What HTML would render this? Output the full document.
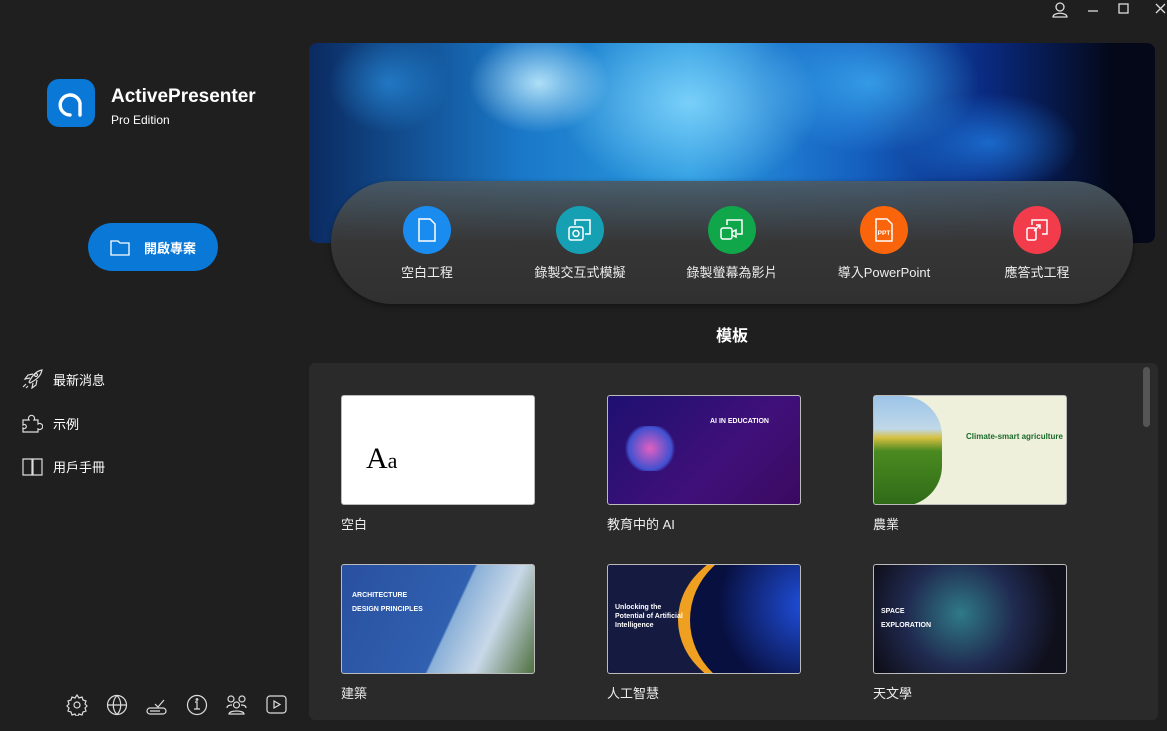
<!DOCTYPE html>
<html><head><meta charset="utf-8"><style>
*{margin:0;padding:0;box-sizing:border-box}
body{width:1167px;height:731px;background:#1f1f1f;font-family:"Liberation Sans","Noto Sans CJK TC",sans-serif;color:#fff;position:relative;overflow:hidden}
.abs{position:absolute}
.banner{left:309px;top:43px;width:846px;height:200px;border-radius:8px;overflow:hidden;
background:
radial-gradient(ellipse 70px 50px at 230px 40px,rgba(200,240,255,.85),transparent),
radial-gradient(ellipse 130px 90px at 380px 60px,rgba(140,220,255,.8),transparent),
radial-gradient(ellipse 110px 70px at 560px 40px,rgba(60,170,240,.8),transparent),
radial-gradient(ellipse 90px 50px at 680px 100px,rgba(30,120,220,.8),transparent),
radial-gradient(ellipse 60px 50px at 80px 40px,rgba(40,140,220,.7),transparent),
linear-gradient(90deg,#0b2a60,#1a78c8 25%,#2a9ae0 45%,#1560c0 65%,#0a2a80 80%,#040818 95%);}
.pill{left:331px;top:181px;width:802px;height:123px;border-radius:62px;
background:linear-gradient(180deg,rgba(75,90,100,.92),#363636 50%,#303030);box-shadow:0 2px 6px rgba(0,0,0,.4)}
.act{position:absolute;top:206px;width:160px;text-align:center;font-size:13px;color:#eee}
.act .c{width:48px;height:48px;border-radius:50%;margin:0 auto 8px;display:flex;align-items:center;justify-content:center}
.nav{left:22px;font-size:13px;display:flex;align-items:center;gap:10px}
.panel{left:309px;top:363px;width:849px;height:357px;background:#2a2a2a;border-radius:6px}
.t{position:absolute;width:194px;height:110px;border:1px solid #bbb;border-radius:3px;overflow:hidden}
.lbl{position:absolute;font-size:13px;color:#eee}
</style></head><body>
<svg class="abs" style="left:1050px;top:0" width="117" height="20" fill="none" stroke="#ddd" stroke-width="1.3">
<circle cx="10" cy="7" r="4"/><path d="M3 17c0-5 14-5 14 0z"/>
<path d="M38 11h10"/><rect x="69" y="4" width="9" height="9"/><path d="M106 4l9 9M115 4l-9 9"/></svg>
<div class="abs" style="left:47px;top:79px;width:48px;height:48px;border-radius:12px;background:#0a78d7"></div>
<svg class="abs" style="left:47px;top:79px" width="48" height="48" fill="none" stroke="#fff" stroke-width="3.4" stroke-linecap="round"><path d="M33 36V24a10 10 0 1 0-10 12"/></svg>
<div class="abs" style="left:111px;top:86px;font-size:19px;font-weight:bold">ActivePresenter</div>
<div class="abs" style="left:111px;top:113px;font-size:12px">Pro Edition</div>
<div class="abs" style="left:88px;top:223px;width:130px;height:48px;border-radius:24px;background:#0a78d7;font-size:13px;font-weight:bold;display:flex;align-items:center">
<svg style="margin-left:22px" width="20" height="18" fill="none" stroke="#fff" stroke-width="1.3"><path d="M1 3h7l2 2h9v12H1z"/></svg><span style="margin-left:14px">開啟專案</span></div>
<div class="abs nav" style="top:369px"><svg width="21" height="20" fill="none" stroke="#ddd" stroke-width="1.2"><path d="M7 13c4-8 8-11 13-12-1 5-4 9-12 13zM8 9l-5 1 3-4 5-1M11 14l-1 5 4-3 1-5"/><circle cx="14" cy="6" r="1.5"/><path d="M4 15l-3 3M6 17l-2 2"/></svg>最新消息</div>
<div class="abs nav" style="top:413px"><svg width="21" height="20" fill="none" stroke="#ddd" stroke-width="1.2"><path d="M1 7h6a3 3 0 1 1 5 0h4v4a3 3 0 1 1 0 5v3H1v-4a2 2 0 1 0 0-3z"/></svg>示例</div>
<div class="abs nav" style="top:457px"><svg width="21" height="18" fill="none" stroke="#ddd" stroke-width="1.2"><path d="M1 1h9v16H1zM11 1h9v16h-9z"/></svg>用戶手冊</div>
<svg class="abs" style="left:66px;top:694px" width="225" height="22" fill="none" stroke="#ddd" stroke-width="1.2">
<circle cx="11" cy="11" r="3"/><path d="M11 1l2 3 3-1 1 3 3 1-1 3 2 2-2 2 1 3-3 1-1 3-3-1-2 3-2-3-3 1-1-3-3-1 1-3-2-2 2-2-1-3 3-1 1-3 3 1z"/>
<circle cx="51" cy="11" r="9.5"/><path d="M41.5 11h19M51 1.5c-5 5-5 14 0 19M51 1.5c5 5 5 14 0 19"/>
<rect x="81" y="14" width="19" height="6" rx="3"/><path d="M84 17h10M89 10l3 3 6-7"/>
<circle cx="131" cy="11" r="9.5"/><path d="M129 8h2v7M128 15h6"/><circle cx="131" cy="5.5" r=".8"/>
<circle cx="165" cy="5" r="3"/><circle cx="176" cy="5" r="3"/><circle cx="170.5" cy="11" r="3"/><path d="M163 20c0-4 15-4 15 0zM161 14c0-3 4-3 5-3M180 14c0-3-4-3-5-3"/>
<rect x="201" y="2" width="19" height="17" rx="3"/><path d="M208 7v7l6-3.5z"/></svg>
<div class="abs banner"></div>
<div class="abs pill"></div>
<div class="act" style="left:347px"><div class="c" style="background:#1a8cf0"><svg width="22" height="26" fill="none" stroke="#fff" stroke-width="1.5"><path d="M3 2h11l5 5v17H3z"/></svg></div>空白工程</div>
<div class="act" style="left:500px"><div class="c" style="background:#16a0b4"><svg width="26" height="26" fill="none" stroke="#fff" stroke-width="1.5"><path d="M8 8V3h15v14h-5"/><rect x="2" y="10" width="14" height="13" rx="2"/><circle cx="9" cy="16.5" r="3"/></svg></div>錄製交互式模擬</div>
<div class="act" style="left:652px"><div class="c" style="background:#10a64a"><svg width="26" height="26" fill="none" stroke="#fff" stroke-width="1.5"><path d="M8 8V3h15v14h-5"/><rect x="2" y="11" width="11" height="11" rx="2"/><path d="M13 15l4-2v7l-4-2"/></svg></div>錄製螢幕為影片</div>
<div class="act" style="left:804px"><div class="c" style="background:#fa640a"><svg width="22" height="26" fill="none" stroke="#fff" stroke-width="1.5"><path d="M3 2h11l5 5v17H3z"/><text x="11" y="18" font-size="6.5" fill="#fff" stroke="none" text-anchor="middle" font-family="Liberation Sans" font-weight="bold">PPT</text></svg></div>導入PowerPoint</div>
<div class="act" style="left:957px"><div class="c" style="background:#f23c4b"><svg width="26" height="26" fill="none" stroke="#fff" stroke-width="1.5"><path d="M8 8V3h15v14h-5"/><rect x="3" y="11" width="9" height="12" rx="1.5"/><path d="M10 14l6-6M12 8h4v4"/></svg></div>應答式工程</div>
<div class="abs" style="left:716px;top:322px;font-size:16px;font-weight:bold">模板</div>
<div class="abs panel"></div>
<div class="abs" style="left:1143px;top:367px;width:7px;height:60px;border-radius:4px;background:#555"></div>
<div class="t" style="left:341px;top:395px;background:#fff"><div style="position:absolute;left:24px;top:46px;color:#000;font-family:'Liberation Serif',serif;font-size:30px">A<span style="font-size:22px">a</span></div></div>
<div class="lbl" style="left:341px;top:514px">空白</div>
<div class="t" style="left:607px;top:395px;background:linear-gradient(135deg,#1e1070,#40107a 60%,#3a0a60)">
<div style="position:absolute;left:102px;top:22px;font-size:7px;font-weight:bold">AI IN EDUCATION</div>
<div style="position:absolute;left:14px;top:30px;width:56px;height:45px;border-radius:40% 40% 10% 10%;background:radial-gradient(circle,#e060c0,#4050d0 60%,transparent 70%)"></div></div>
<div class="lbl" style="left:607px;top:514px">教育中的 AI</div>
<div class="t" style="left:873px;top:395px;background:#eef0dc">
<div style="position:absolute;left:0;top:0;width:68px;height:110px;border-radius:0 40px 40px 0;background:linear-gradient(180deg,#9cc4e8 0%,#c0d8e8 30%,#d6c040 38%,#4a8a20 50%,#2f6a18)"></div>
<div style="position:absolute;left:92px;top:36px;font-size:8px;font-weight:bold;color:#1a6a2a">Climate-smart agriculture</div></div>
<div class="lbl" style="left:873px;top:514px">農業</div>
<div class="t" style="left:341px;top:564px;background:linear-gradient(115deg,#2a50a0 0%,#3060b0 55%,#8ab0d8 56%,#c8d8e8 75%,#507040 100%)">
<div style="position:absolute;left:10px;top:24px;font-size:7px;font-weight:bold;line-height:14px">ARCHITECTURE<br>DESIGN PRINCIPLES</div></div>
<div class="lbl" style="left:341px;top:683px">建築</div>
<div class="t" style="left:607px;top:564px;background:#141a40">
<div style="position:absolute;left:70px;top:-20px;width:180px;height:150px;border-radius:50%;border-left:12px solid #f0a020;background:radial-gradient(circle at 70% 40%,#2050e0,#081040 60%)"></div>
<div style="position:absolute;left:7px;top:38px;font-size:7px;font-weight:bold;line-height:9px">Unlocking the<br>Potential of Artificial<br>Intelligence</div></div>
<div class="lbl" style="left:607px;top:683px">人工智慧</div>
<div class="t" style="left:873px;top:564px;background:radial-gradient(circle at 45% 45%,#2f7a88,#202a50 45%,#10101c 80%)">
<div style="position:absolute;left:7px;top:40px;font-size:7px;font-weight:bold;line-height:14px">SPACE<br>EXPLORATION</div></div>
<div class="lbl" style="left:873px;top:683px">天文學</div>
</body></html>
